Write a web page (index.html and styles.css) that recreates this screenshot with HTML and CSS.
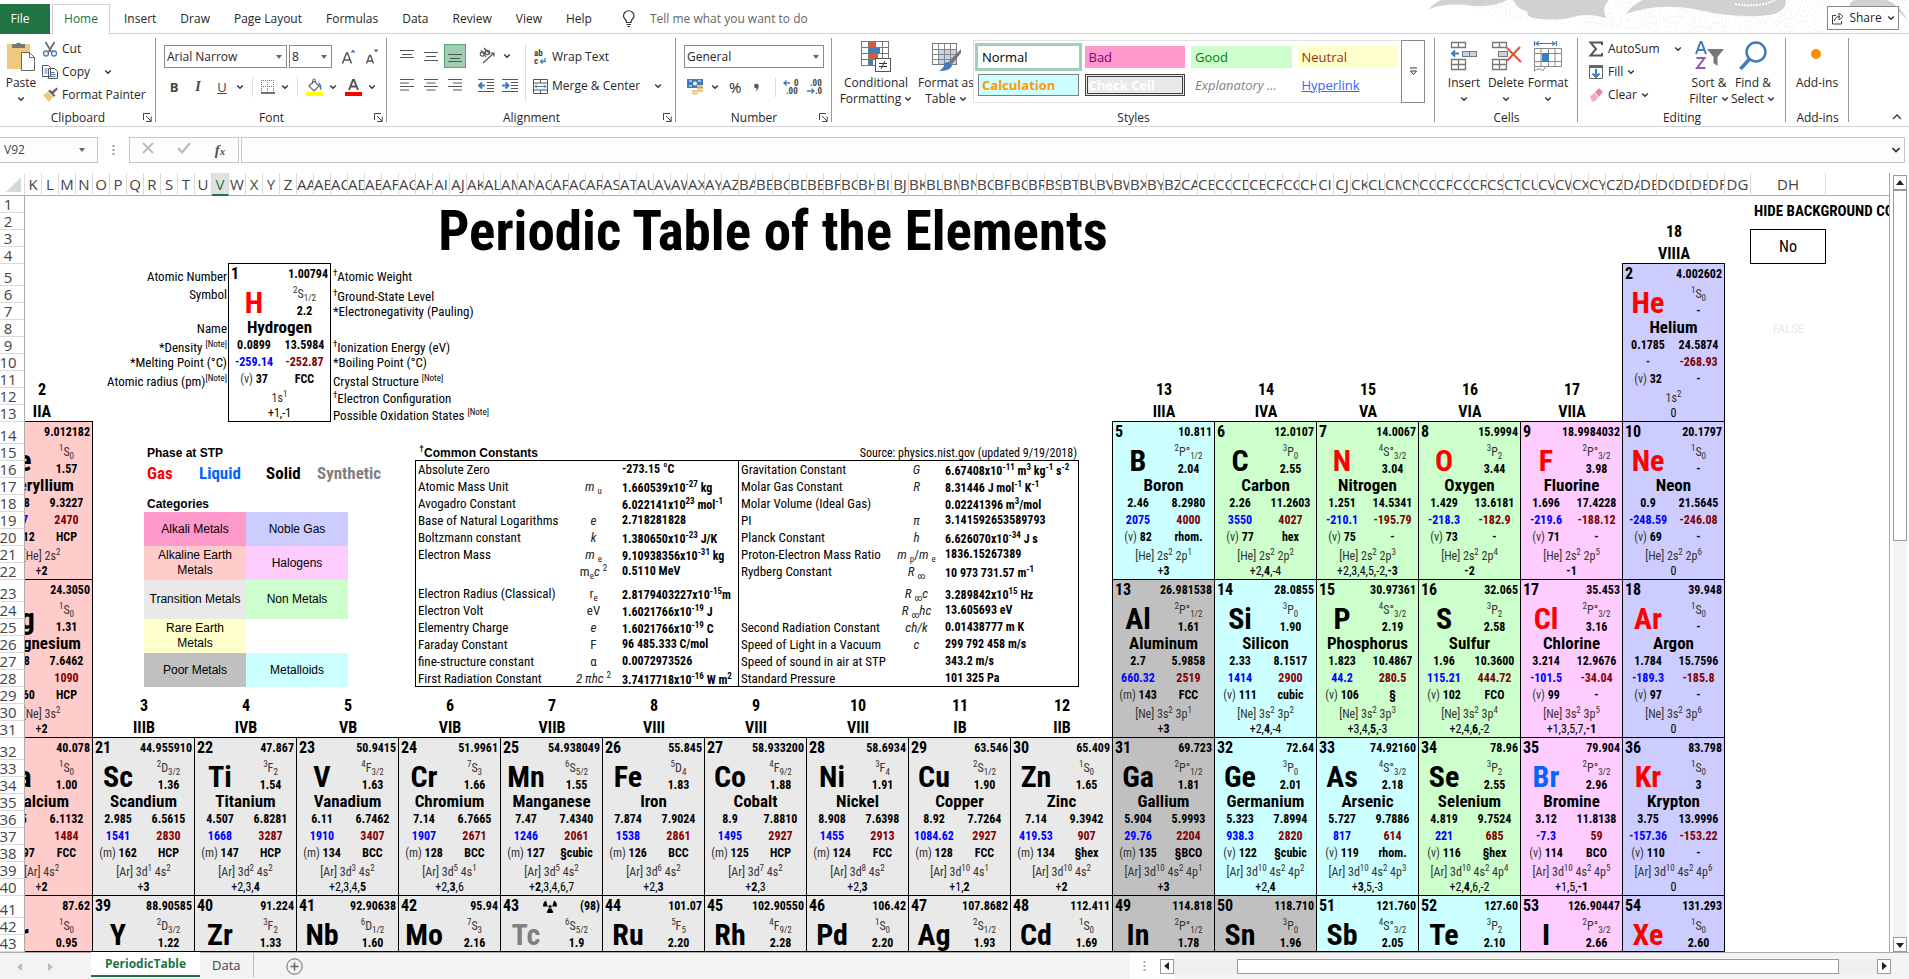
FILE: index.html
```html
<!DOCTYPE html>
<html lang="en">
<head>
<meta charset="utf-8">
<title>PeriodicTable</title>
<link rel="stylesheet" href="styles.css">
</head>
<body>
<svg class="defs" width="0" height="0" aria-hidden="true">
  <symbol id="chev" viewBox="0 0 8 8"><path d="M1.2 2.5 4 5.3 6.8 2.5" fill="none" stroke="#333" stroke-width="1.4"/></symbol>
  <symbol id="tri" viewBox="0 0 8 8"><path d="M1 2h6L4 6z" fill="#666"/></symbol>
  <symbol id="launch" viewBox="0 0 9 9"><path d="M.5 7V.5H7M3 3l5 5M8.200 3.500v5h-5" fill="none" stroke="#444"/></symbol>
</svg>

<header class="tabs">
  <svg class="art" viewBox="0 0 480 33" aria-hidden="true">
    <filter id="grain" x="0" y="0" width="1" height="1"><feTurbulence type="fractalNoise" baseFrequency=".8" numOctaves="2"/><feColorMatrix values="0 0 0 0 .82  0 0 0 0 .82  0 0 0 0 .82  0 0 0 5 -2.800"/><feComposite in2="SourceGraphic" operator="in"/></filter>
    <path d="M20 0H480V33H250Q130 26 60 15Z" fill="#fff" filter="url(#grain)"/>
    <path d="M0 9Q8 0 14 0H78Q66 7 44 6Q20 2 0 9Z" fill="#d1d1d1"/>
    <path d="M84 0H180Q172 8 177 18Q160 13 148 16Q130 22 104 18Q96 15 99 12Q88 9 84 0Z" fill="#d1d1d1"/>
    <path d="M197 14Q204 4 214 0H357Q358 12 340 15Q310 19 270 10Q230 2 197 14Z" fill="#d1d1d1"/>
    <path d="M306 4Q330 8 346 0" fill="none" stroke="#fff" stroke-width="2" stroke-dasharray="2 1"/>
    <path d="M420 8Q420 2 426 0H458Q470 5 479 20L470 12Q440 4 420 8Z" fill="#d1d1d1"/>
  </svg>
  <nav class="tablist">
    <button class="tab file">File</button>
    <button class="tab home">Home</button>
    <button class="tab">Insert</button>
    <button class="tab">Draw</button>
    <button class="tab">Page Layout</button>
    <button class="tab">Formulas</button>
    <button class="tab">Data</button>
    <button class="tab">Review</button>
    <button class="tab">View</button>
    <button class="tab">Help</button>
  </nav>
  <button class="tell"><svg width="14" height="18" viewBox="0 0 14 18"><path d="M4.500 12.500Q4.500 10.500 3 9Q1.500 7.500 1.500 6A5 5 0 0 1 12 6Q12 7.500 10.500 9Q9 10.500 9 12.500ZM4.500 14.500H9M5.500 16.500H8" fill="none" stroke="#333" stroke-width="1.200"/></svg>Tell me what you want to do</button>
  <button class="share"><svg width="13" height="13" viewBox="0 0 13 13"><path d="M5 3.500H1.500V12H10.500V9M3.500 9Q4 4.500 9 4.500M8 1l4 3.500L8 8z" fill="none" stroke="#444"/></svg>Share<svg class="c"><use href="#chev"/></svg></button>
</header>

<section class="ribbon">
  <div class="group clip">
    <div class="body">
      <button class="big"><svg width="30" height="31" viewBox="0 0 30 31"><rect x="1" y="3" width="23" height="25" fill="#edc87e"/><path d="M6 3h4a3 3 0 0 1 5 0h4v4H6z" fill="#777"/><path d="M15.500 11.500h8l5 5v13h-13z" fill="#fff" stroke="#666"/><path d="M23.500 11.500v5h5" fill="none" stroke="#666"/></svg><span>Paste</span><svg class="c"><use href="#chev"/></svg></button>
      <div class="stack">
        <button><svg width="16" height="16" viewBox="0 0 16 16"><path d="M3.500 1l6 10M12.500 1l-6 10" stroke="#666" stroke-width="1.600"/><circle cx="4" cy="12.500" r="2.500" fill="none" stroke="#3f7cb8" stroke-width="1.300"/><circle cx="12" cy="12.500" r="2.500" fill="none" stroke="#3f7cb8" stroke-width="1.300"/></svg>Cut</button>
        <button><svg width="16" height="16" viewBox="0 0 16 16"><path d="M.5 1.500h6l2 2v9h-8zM6.500 4.500h6l3 3v7h-9z" fill="#fff" stroke="#555"/><path d="M2.500 5h3M2.500 7h3M2.500 9h3M8.500 8.500h4M8.500 10.500h5M8.500 12.500h5" stroke="#3f7cb8"/></svg>Copy<svg class="c far"><use href="#chev"/></svg></button>
        <button><svg width="16" height="16" viewBox="0 0 16 16"><path d="M1 8l5-3 5 5-4 5z" fill="#edc87e"/><path d="M6 4l6 6 1.500-1.500-2-2L16 2 14.500.5 10 4.500l-2-2z" fill="#666"/></svg>Format Painter</button>
      </div>
    </div>
    <footer>Clipboard<svg class="l"><use href="#launch"/></svg></footer>
  </div>

  <div class="group font">
    <div class="body rows">
      <div class="row">
        <label class="combo w123"><select aria-label="Font"><option>Arial Narrow</option></select><svg class="c"><use href="#tri"/></svg></label>
        <label class="combo w43"><select aria-label="Font size"><option>8</option></select><svg class="c"><use href="#tri"/></svg></label>
        <button class="ic g6" aria-label="Increase font size"><svg width="16" height="18" viewBox="0 0 16 18"><path d="M1.500 15.500L5.500 5h1l4 10.500M3 12h6" fill="none" stroke="#555" stroke-width="1.500"/><path d="M9.500 4.500h5l-2.500-3z" fill="#3f7cb8"/></svg></button>
        <button class="ic g6" aria-label="Decrease font size"><svg width="16" height="18" viewBox="0 0 16 18"><path d="M2.500 15.500L5.500 7.500h1l3 8M3.500 13h5" fill="none" stroke="#555" stroke-width="1.400"/><path d="M9.500 1.500h5l-2.500 3z" fill="#3f7cb8"/></svg></button>
      </div>
      <div class="row fmt">
        <button class="ic"><b>B</b></button><button class="ic"><i>I</i></button><button class="ic"><u>U</u></button><svg class="c"><use href="#chev"/></svg><span class="vr"></span>
        <button class="ic" aria-label="Borders"><svg width="14" height="14" viewBox="0 0 14 14"><path d="M.5 0v13M6.500 0v13M12.500 0v13M0 .5h13M0 6.500h13" stroke="#777" stroke-dasharray="1 1"/><path d="M0 13h14" stroke="#444" stroke-width="1.500"/></svg></button><svg class="c"><use href="#chev"/></svg><span class="vr"></span>
        <button class="ic" aria-label="Fill colour"><svg width="17" height="18" viewBox="0 0 17 18"><path d="M3 8l5-5 5 5-5 5z" fill="#fff" stroke="#666" stroke-width="1.200"/><path d="M6.500 6V2.500a1.500 1.500 0 0 1 3 0V5" fill="none" stroke="#666"/><path d="M12 4q4 2 3.500 8-2 0-2-4z" fill="#3f7cb8"/><path d="M0 14h17v4H0z" fill="#ff0"/></svg></button><svg class="c"><use href="#chev"/></svg>
        <button class="ic" aria-label="Font colour"><svg width="17" height="18" viewBox="0 0 17 18"><path d="M4 12L8 2h1l4 10M5.500 8.500h6" fill="none" stroke="#555" stroke-width="2"/><path d="M0 14h17v4H0z" fill="red"/></svg></button><svg class="c"><use href="#chev"/></svg>
      </div>
    </div>
    <footer>Font<svg class="l"><use href="#launch"/></svg></footer>
  </div>

  <div class="group align">
    <div class="body">
      <div class="grid3">
        <button class="ic"><svg width="14" height="14" viewBox="0 0 14 14"><path d="M0 1.500h14M2 5.500h10M0 8.500h14" stroke="#555"/></svg></button>
        <button class="ic"><svg width="14" height="14" viewBox="0 0 14 14"><path d="M0 3.500h14M2 7.500h10M0 11.500h14" stroke="#555"/></svg></button>
        <button class="ic on"><svg width="14" height="14" viewBox="0 0 14 14"><path d="M0 5.500h14M2 9.500h10M0 12.500h14" stroke="#555"/></svg></button>
        <button class="ic"><svg width="14" height="14" viewBox="0 0 14 14"><path d="M0 1.500h14M0 5h9M0 8.500h14M0 12h9" stroke="#555"/></svg></button>
        <button class="ic"><svg width="14" height="14" viewBox="0 0 14 14"><path d="M0 1.500h14M2.500 5h9M0 8.500h14M2.500 12h9" stroke="#555"/></svg></button>
        <button class="ic"><svg width="14" height="14" viewBox="0 0 14 14"><path d="M0 1.500h14M5 5h9M0 8.500h14M5 12h9" stroke="#555"/></svg></button>
      </div>
      <div class="grid2">
        <div class="row"><button class="ic" aria-label="Orientation"><svg width="18" height="18" viewBox="0 0 18 18"><circle cx="4.500" cy="7" r="2.200" fill="none" stroke="#555" stroke-width="1.200"/><circle cx="9.500" cy="5.500" r="2.200" fill="none" stroke="#555" stroke-width="1.200"/><path d="M3 3l5 7M6 1l5.500 5.500M5 16L16 6M12.500 6H16v3.500" fill="none" stroke="#555" stroke-width="1.200"/></svg></button><svg class="c"><use href="#chev"/></svg></div>
        <div class="row"><button class="ic" aria-label="Decrease indent"><svg width="17" height="15" viewBox="0 0 17 15"><path d="M0 1.500h16M9 4.500h7M9 7.500h7M9 10.500h7M0 13.500h16" stroke="#555"/><path d="M1 7.500h6M4 4.500l-3 3 3 3" fill="none" stroke="#3f7cb8" stroke-width="2"/></svg></button><button class="ic" aria-label="Increase indent"><svg width="17" height="15" viewBox="0 0 17 15"><path d="M0 1.500h16M9 4.500h7M9 7.500h7M9 10.500h7M0 13.500h16" stroke="#555"/><path d="M0 7.500h6M3.500 4.500l3 3-3 3" fill="none" stroke="#3f7cb8" stroke-width="2"/></svg></button></div>
      </div>
      <div class="wrapcol">
        <button><svg width="15" height="16" viewBox="0 0 15 16"><text x="1" y="7" class="ab">ab</text><text x="1" y="15" class="ab">c</text><path d="M12 9v3.500H7.500M9.500 10.500l-2 2 2 2" fill="none" stroke="#3f7cb8" stroke-width="1.300"/></svg>Wrap Text</button>
        <button class="merge"><svg width="15" height="15" viewBox="0 0 15 15"><path d="M.5.5h14v14H.5zM.5 4h14M.5 11h14M7.500.5V4M7.500 11v3.500" fill="none" stroke="#555"/><path d="M2 7.500h11M4 5.500l-2 2 2 2M11 5.500l2 2-2 2" fill="none" stroke="#3f7cb8"/></svg>Merge &amp; Center<svg class="c"><use href="#chev"/></svg></button>
      </div>
    </div>
    <footer>Alignment<svg class="l"><use href="#launch"/></svg></footer>
  </div>

  <div class="group number">
    <div class="body rows">
      <div class="row"><label class="combo w140"><select aria-label="Number format"><option>General</option></select><svg class="c"><use href="#tri"/></svg></label></div>
      <div class="row num">
        <button class="ic" aria-label="Currency"><svg width="17" height="17" viewBox="0 0 17 17"><rect x="0" y="0" width="16" height="9" fill="#3f7cb8"/><path d="M2 2h3M11 2h3M2 7h3" stroke="#fff"/><circle cx="8" cy="4.500" r="2" fill="#fff"/><path d="M10 7h6M10 9.500h6M10 12h6M5 12h5M5 14.500h6" stroke="#edc87e" stroke-width="2"/></svg></button><svg class="c"><use href="#chev"/></svg>
        <button class="ic big-ch">%</button><button class="ic comma" aria-label="Comma style"><svg width="7" height="9" viewBox="0 0 7 9"><path d="M1 3a2.300 2.300 0 1 1 4.700 0Q5.500 7 2 8.500 4 6.500 3.600 5.200 1.300 5.300 1 3z" fill="#555"/></svg></button><span class="vr"></span>
        <button class="ic" aria-label="Increase decimal"><svg width="17" height="16" viewBox="0 0 17 16"><text x="11" y="7" class="ab">0</text><text x="3" y="15" class="ab">.00</text><path d="M1 4h6M3.500 1.500L1 4l2.500 2.500" fill="none" stroke="#3f7cb8" stroke-width="1.300"/></svg></button>
        <button class="ic" aria-label="Decrease decimal"><svg width="17" height="16" viewBox="0 0 17 16"><text x="3" y="7" class="ab">.00</text><text x="8" y="15" class="ab">.0</text><path d="M0 12h7M4.500 9.500L7 12l-2.500 2.500" fill="none" stroke="#3f7cb8" stroke-width="1.300"/></svg></button>
      </div>
    </div>
    <footer>Number<svg class="l"><use href="#launch"/></svg></footer>
  </div>

  <div class="group styles">
    <div class="body">
      <button class="big w88"><svg width="31" height="31" viewBox="0 0 31 31"><rect x=".5" y=".5" width="27" height="24" fill="#fff" stroke="#777"/><path d="M7.500 0v25M14.500 0v25M21.500 0v25M0 6.500h28M0 12.500h28M0 18.500h28" stroke="#777"/><path d="M8 1h6v5H8zM8 13h9v5H8z" fill="#d9593d"/><path d="M8 7h11v5H8zM8 19h4v5H8z" fill="#3f7cb8"/><rect x="14.500" y="17.500" width="15" height="13" fill="#fff" stroke="#555"/><path d="M18 22.500h8M18 25.500h8M24 20l-4 8" stroke="#333"/></svg><span>Conditional</span><span>Formatting <svg class="c"><use href="#chev"/></svg></span></button>
      <button class="big w66"><svg width="31" height="31" viewBox="0 0 31 31"><rect x="1.500" y="2.500" width="24" height="21" fill="#fff" stroke="#777"/><path d="M8 8h17v15H8z" fill="#c2d3e8"/><path d="M7.500 2v22M13.500 2v22M19.500 2v22M1 8.500h25M1 13.500h25M1 18.500h25" stroke="#888"/><path d="M30 8L18 20l3 3 9-11z" fill="#777"/><path d="M17 21q4 0 4 4-2 5-13 5 5-3 5-6 1-3 4-3z" fill="#3f7cb8"/></svg><span>Format as</span><span>Table <svg class="c"><use href="#chev"/></svg></span></button>
      <div class="gallery">
        <div class="swatches">
          <button class="sw normal">Normal</button><button class="sw bad">Bad</button><button class="sw good">Good</button><button class="sw neutral">Neutral</button>
          <button class="sw calc">Calculation</button><button class="sw check">Check Cell</button><button class="sw expl">Explanatory ...</button><button class="sw link">Hyperlink</button>
        </div>
        <button class="more" aria-label="More styles"><svg width="9" height="9" viewBox="0 0 9 9"><path d="M1 1h7" stroke="#333"/><path d="M1.500 4h6L4.500 7.500z" fill="none" stroke="#333"/></svg></button>
      </div>
    </div>
    <footer>Styles</footer>
  </div>

  <div class="group cells">
    <div class="body">
      <button class="big w42"><svg width="29" height="31" viewBox="0 0 29 31"><path d="M1.500 1.500h14v5h-14zM8.500 1.500v5M1.500 18.500h14v10h-14zM8.500 18.500v10M1.500 23.500h14" fill="none" stroke="#777" stroke-width="1.300"/><rect x="12.500" y="10.500" width="14" height="5" fill="#c2d3e8" stroke="#777"/><path d="M19.500 10v6" stroke="#777"/><path d="M2 12.500h7M5 9.500l-3 3 3 3" fill="none" stroke="#3f7cb8" stroke-width="2"/></svg><span>Insert</span><svg class="c"><use href="#chev"/></svg></button>
      <button class="big w42"><svg width="31" height="31" viewBox="0 0 31 31"><path d="M1.500 1.500h14v5h-14zM8.500 1.500v5M1.500 18.500h14v10h-14zM8.500 18.500v10M1.500 23.500h14" fill="none" stroke="#777" stroke-width="1.300"/><rect x="7.500" y="10.500" width="9" height="5" fill="#c2d3e8" stroke="#777"/><path d="M16 7l14 14M29 6L16 20" stroke="#d9593d" stroke-width="2.200"/></svg><span>Delete</span><svg class="c"><use href="#chev"/></svg></button>
      <button class="big w42"><svg width="30" height="31" viewBox="0 0 30 31"><path d="M1.500 0v5M23.500 0v5M3 2.500h19M6 .5l-3 2 3 2M19 .5l3 2-3 2" fill="none" stroke="#3f7cb8" stroke-width="1.200"/><path d="M1.500 7.500h27v18h-27zM8 7v19M15.500 7v19M22 7v19M1 12.500h28M1 20.500h28M1.500 26v4l3-2h3l2 2 3-4" fill="none" stroke="#888"/><rect x="9" y="12" width="7" height="9" fill="#3f7cb8"/></svg><span>Format</span><svg class="c"><use href="#chev"/></svg></button>
    </div>
    <footer>Cells</footer>
  </div>

  <div class="group editing">
    <div class="body">
      <div class="stack">
        <button><svg width="16" height="16" viewBox="0 0 16 16"><path d="M14 4V1.500H2.500L8 8l-5.500 6.500H14V12" fill="none" stroke="#555" stroke-width="2"/></svg>AutoSum<svg class="c far"><use href="#chev"/></svg></button>
        <button><svg width="16" height="16" viewBox="0 0 16 16"><path d="M1.500 1.500h13v13h-13z" fill="#fff" stroke="#666"/><path d="M1 1h14v3H1z" fill="#666"/><path d="M8 5v8M4.500 9.500L8 13l3.500-3.500" fill="none" stroke="#3f7cb8" stroke-width="2"/></svg>Fill <svg class="c"><use href="#chev"/></svg></button>
        <button><svg width="16" height="16" viewBox="0 0 16 16"><path d="M7 5l4-4 4 4-4 5z" fill="#e68a9a"/><path d="M2 9.500L6.500 5.500l4 5-4 4H4z" fill="#efb0bb"/></svg>Clear <svg class="c"><use href="#chev"/></svg></button>
      </div>
      <button class="big w44"><svg width="31" height="31" viewBox="0 0 31 31"><path d="M2 13L6.500 1h1L12 13M3.500 9h7" fill="none" stroke="#3f7cb8" stroke-width="2"/><path d="M2.500 17h8L3 27h8.500" fill="none" stroke="#8d5bb5" stroke-width="2"/><path d="M13 8h17l-6.500 8v9l-4-3v-6z" fill="#777"/></svg><span>Sort &amp;</span><span>Filter <svg class="c"><use href="#chev"/></svg></span></button>
      <button class="big w44"><svg width="31" height="31" viewBox="0 0 31 31"><circle cx="18" cy="11" r="9.500" fill="none" stroke="#3f7cb8" stroke-width="2.500"/><path d="M11.500 18L2.500 28" stroke="#3f7cb8" stroke-width="3.500"/></svg><span>Find &amp;</span><span>Select <svg class="c"><use href="#chev"/></svg></span></button>
    </div>
    <footer>Editing</footer>
  </div>

  <div class="group addins">
    <div class="body"><button class="big"><svg width="31" height="31" viewBox="0 0 31 31"><circle cx="14" cy="13" r="5" fill="#ff8c00"/></svg><span>Add-ins</span></button></div>
    <footer>Add-ins</footer>
  </div>
  <button class="collapse" aria-label="Collapse the ribbon"><svg width="10" height="8" viewBox="0 0 10 8"><path d="M1 6l4-4 4 4" fill="none" stroke="#333" stroke-width="1.300"/></svg></button>
</section>

<section class="fbar">
  <label class="namebox"><input value="V92" aria-label="Name box"><svg width="10" height="8" viewBox="0 0 8 8"><use href="#tri"/></svg></label>
  <svg class="dots" width="3" height="12" viewBox="0 0 3 12"><path d="M1.500 1v11" stroke="#999" stroke-width="2" stroke-dasharray="2 2"/></svg>
  <div class="fbtns">
    <button aria-label="Cancel"><svg width="12" height="12" viewBox="0 0 12 12"><path d="M1 1l10 10M11 1L1 11" stroke="#bbb" stroke-width="1.800"/></svg></button>
    <button aria-label="Enter"><svg width="14" height="12" viewBox="0 0 14 12"><path d="M1 6l4 4.500L13 1" fill="none" stroke="#bbb" stroke-width="2.200"/></svg></button>
    <button class="fx">f<small>x</small></button>
  </div>
  <label class="formula"><input aria-label="Formula"><svg width="10" height="10" viewBox="0 0 8 8"><use href="#chev"/></svg></label>
</section>

<main class="work">
  <div class="sheet" id="sheet"></div>
  <div class="vscroll">
    <button aria-label="Scroll up"><svg width="8" height="8" viewBox="0 0 8 8"><path d="M0 6h8L4 1z" fill="#222"/></svg></button>
    <div class="vthumb"></div>
    <div class="vtrack"></div>
    <button aria-label="Scroll down"><svg width="8" height="8" viewBox="0 0 8 8"><path d="M0 2h8L4 7z" fill="#222"/></svg></button>
  </div>
</main>

<footer class="bottom">
  <div class="navs"><button aria-label="Previous sheet"><svg width="6" height="8" viewBox="0 0 6 8"><path d="M5 0v8L0 4z" fill="#bbb"/></svg></button><button aria-label="Next sheet"><svg width="6" height="8" viewBox="0 0 6 8"><path d="M1 0v8l5-4z" fill="#bbb"/></svg></button></div>
  <button class="stab active">PeriodicTable</button>
  <button class="stab">Data</button>
  <button class="plus" aria-label="New sheet"><svg width="17" height="17" viewBox="0 0 17 17"><circle cx="8.500" cy="8.500" r="7.700" fill="none" stroke="#666"/><path d="M8.500 4.500v8M4.500 8.500h8" stroke="#666" stroke-width="1.500"/></svg></button>
  <div class="hscroll">
    <svg class="dots" width="3" height="12" viewBox="0 0 3 12"><path d="M1.500 1v11" stroke="#aaa" stroke-width="2" stroke-dasharray="2 2"/></svg>
    <button aria-label="Scroll left"><svg width="8" height="8" viewBox="0 0 8 8"><path d="M6 0v8L1 4z" fill="#222"/></svg></button>
    <div class="htrack"><div class="hthumb"></div></div>
    <button aria-label="Scroll right"><svg width="8" height="8" viewBox="0 0 8 8"><path d="M2 0v8l5-4z" fill="#222"/></svg></button>
  </div>
</footer>
<script src="script.js"></script>
</body>
</html>
```
FILE: styles.css
```css
* { box-sizing: border-box; }
body { margin: 0; height: 100vh; display: flex; flex-direction: column; overflow: hidden; background: #fff; color: #262626; font: 12px/16px "Open Sans", "Noto Sans", sans-serif; }
button, input, select { font: inherit; color: inherit; background: none; border: 0; padding: 0; margin: 0; border-radius: 0; appearance: none; }
svg { flex: none; }
.defs { position: absolute; }
.c { width: 8px; height: 8px; }
.l { width: 9px; height: 9px; }

/* tab strip */
.tabs { position: relative; height: 34px; border-bottom: 1px solid #d2d2d2; display: flex; align-items: flex-end; }
.art { position: absolute; right: 0; top: 0; width: 480px; height: 33px; }
.tablist { display: flex; height: 30px; margin-bottom: -1px; }
.tab { padding: 0 11px 2px; border: 1px solid transparent; border-bottom: 0; white-space: nowrap; }
.tab.file { background: #217346; color: #fff; width: 50px; margin-right: 2px; padding: 0 10px 2px 0; }
.tab.home { background: #fff; color: #217346; border-color: #d2d2d2; width: 58px; padding: 0 0 2px; margin-right: 2px; }
.tell { display: flex; align-items: center; gap: 14px; color: #666; height: 29px; margin-left: 18px; }
.share { position: relative; margin: 0 10px 3px auto; height: 24px; width: 72px; border: 1px solid #8a8a8a; background: #fff; display: flex; align-items: center; justify-content: center; gap: 5px; }

/* ribbon */
.ribbon { position: relative; display: flex; height: 93px; border-bottom: 1px solid #d2d2d2; flex: none; padding-right: 60px; }
.group { position: relative; display: grid; grid-template-rows: 73px 17px; padding-top: 3px; }
.group::after { content: ""; position: absolute; right: 0; top: 4px; bottom: 4px; width: 1px; background: #999; }
.group footer { text-align: center; }
.group footer .l { position: absolute; right: 4px; bottom: 4px; }
.body { display: flex; }
.clip { width: 156px; }
.font { width: 231px; }
.align { width: 289px; }
.number { width: 156px; }
.styles { flex: 1; }
.cells { width: 143px; }
.editing { width: 208px; }
.addins { width: 63px; }
.big { display: flex; flex-direction: column; align-items: center; padding-top: 4px; white-space: nowrap; }
.big > svg:first-child { margin-bottom: 3px; }
.big > .c { margin-top: 4px; }
.clip .big { width: 42px; }
.w88 { width: 88px; }
.w66 { width: 52px; }
.w42 { width: 42px; }
.w44 { width: 44px; }
.stack { display: grid; grid-template-rows: repeat(3, 23px); }
.stack button { display: flex; align-items: center; gap: 4px; white-space: nowrap; }
.far { margin-left: 10px; }
.rows { flex-direction: column; padding: 8px 0 0 8px; gap: 8px; }
.row { display: flex; align-items: center; }
.combo { position: relative; display: flex; border: 1px solid #8a8a8a; height: 23px; margin-right: 2px; }
.combo select { flex: 1; padding-left: 2px; }
.combo .c { position: absolute; right: 3px; top: 7px; pointer-events: none; }
.w123 { width: 123px; }
.w43 { width: 43px; }
.w140 { width: 140px; }
.ic { display: flex; align-items: center; justify-content: center; }
.g6 { margin-left: 7px; }
.fmt { gap: 8px; height: 22px; padding-left: 2px; }
.fmt .ic { min-width: 14px; font-size: 13px; }
.fmt i { font-family: "Liberation Serif", serif; font-weight: bold; font-size: 14px; }
.fmt .ic:nth-child(-n+3) { width: 16px; color: #444; }
.fmt .c { margin-left: -2px; }
.vr { width: 1px; height: 20px; background: #ddd; }
.grid3 { display: grid; grid-template: 25px 34px / repeat(3, 24px); padding: 6px 0 0 8px; align-items: center; justify-items: center; }
.on { background: #9fccb3; border: 1px solid #5fa07c; width: 22px; height: 24px; }
.grid2 { display: grid; grid-template-rows: 25px 34px; padding: 6px 0 0 11px; width: 58px; }
.grid2 .row { gap: 7px; }
.wrapcol { border-left: 1px solid #ddd; margin: 7px 0 9px; display: grid; grid-template-rows: 25px 34px; padding-left: 7px; }
.wrapcol button { display: flex; align-items: center; gap: 4px; white-space: nowrap; }
.merge .c { margin-left: 10px; }
.ab { font: bold 9px "Roboto Condensed", "Liberation Sans", sans-serif; fill: #444; }
.num { gap: 7px; height: 22px; padding-left: 3px; }
.big-ch { font-size: 15px; margin-left: 3px; }
.comma { margin: 0 8px 0 5px; }
.gallery { display: flex; flex: 1; margin: 3px 10px 7px 1px; border: 1px solid #e1e1e1; height: 63px; }
.swatches { flex: 1; display: grid; grid-template: 22px 22px / repeat(4, 1fr); gap: 6px; padding: 5px 4px; }
.sw { text-align: left; padding: 0 4px; font-size: 13px; white-space: nowrap; overflow: hidden; }
.normal { outline: 3px solid #9fd0b8; color: #000; }
.bad { background: #ff99cc; color: #800080; }
.good { background: #ccffcc; color: #008000; }
.neutral { background: #ffffcc; color: #993300; }
.calc { background: #ccffff; color: #ff9900; border: 1px solid #7f7f7f; font-weight: bold; padding: 0 3px; line-height: 16px; }
.check { background: #e9e9e9; color: #fff; border: 3px double #3f3f3f; font-weight: bold; padding: 0 1px; line-height: 14px; }
.expl { color: #7f7f7f; font-style: italic; }
.link { color: #3366ff; text-decoration: underline; }
.more { width: 24px; border: 1px solid #8a8a8a; margin: -1px; }
.cells .body { padding-left: 8px; }
.editing .body { padding-left: 10px; }
.editing .stack { width: 99px; }
.editing .stack .far { margin-left: 10px; }
.addins .big { width: 62px; }
.collapse { position: absolute; right: 7px; bottom: 1px; }

/* formula bar */
.fbar { display: flex; align-items: center; padding: 10px 4px 10px 0; flex: none; height: 46px; }
.namebox, .formula { display: flex; align-items: center; border: 1px solid #c6c6c6; height: 26px; background: #fdfdfd; }
.namebox { width: 98px; border-left: 0; padding-right: 10px; }
.namebox input { flex: 1; min-width: 0; padding-left: 4px; color: #444; }
.dots { margin: 0 14px; }
.fbtns { display: flex; width: 110px; height: 26px; border: 1px solid #c6c6c6; background: #fdfdfd; margin-right: 2px; }
.fbtns button { flex: 1; }
.fx { font: italic bold 15px "Liberation Serif", serif; color: #555; }
.fx small { font-size: 11px; }
.formula { flex: 1; padding-right: 3px; }
.formula input { flex: 1; }

/* sheet */
.work { flex: 1; min-height: 0; display: flex; }
.sheet { flex: 1; min-width: 0; overflow: hidden; display: grid; align-content: start;
  grid-template-columns: 25px repeat(100, 17px) 26px 75px 1fr;
  grid-template-rows: 23px repeat(4, 17px) repeat(5, 22px 17px 17px 17px 17px 17px 17px 17px 17px);
  font: 13px/17px "Roboto Condensed", "Liberation Sans", sans-serif; color: #000; border-right: 1px solid #ababab; }
.corner { border-right: 1px solid #ddd; border-bottom: 1px solid #ababab; display: flex; justify-content: flex-end; padding: 4px 3px 3px; }
.ch { display: flex; justify-content: safe center; align-items: center; overflow: hidden; border-right: 1px solid #dadada; border-bottom: 1px solid #ababab; font: 15px/22px "Open Sans", sans-serif; color: #444; min-width: 0; }
.ch.last { border-right: 0; }
.ch.sel { background: #e1e1e1; color: #217346; border-bottom: 2px solid #217346; }
.rh { display: flex; align-items: flex-end; justify-content: center; padding-right: 8px; border-right: 1px solid #ababab; border-bottom: 1px solid #dadada; font: 15px/16px "Open Sans", sans-serif; color: #444; position: relative; z-index: 1; background: #fff; }
sup, sub { font-size: 9px; line-height: 0; }
sup { vertical-align: 5px; }
sub { vertical-align: -3px; }

.title { display: flex; align-items: center; justify-content: center; font-weight: bold; font-size: 55px; line-height: 60px; white-space: nowrap; padding-top: 2px; }
.gn, .gr { display: flex; align-items: center; justify-content: center; font-weight: bold; font-size: 16px; }
.gn { padding-top: 3px; }
.gr { padding-bottom: 4px; }

.el { margin: -1px 0 0 -1px; border: 1px solid #000; display: grid; grid-template: 21px repeat(8, 17px) / 50px 51px; overflow: hidden; font-size: 12px; font-weight: bold; text-align: center; white-space: nowrap; line-height: 18px; justify-content: end; }
.el.cut { margin-left: 0; border-left: 0; }
.el > span { min-width: 0; }
.el .top { grid-column: 1 / 3; display: flex; justify-content: space-between; padding: 0 2px; line-height: 20px; }
.el .z { font-size: 16px; }
.el .sym { grid-row: 2 / 4; font-size: 30px; line-height: 36px; display: flex; justify-content: center; }
.el .term { font-weight: normal; color: #333; line-height: 19px; }
.el .name { grid-column: 1 / 3; font-size: 17px; line-height: 16px; display: flex; justify-content: center; }
.el .mp { color: #0000ff; }
.el .bp { color: #800000; }
.el em { font-style: normal; font-weight: normal; color: #333; }
.el .conf { grid-column: 1 / 3; font-weight: normal; color: #333; line-height: 23px; }
.el .ox { grid-column: 1 / 3; font-weight: normal; line-height: 18px; }
.rad { margin-top: 4px; }

.alkali { background: #ff99cc; }
.earth { background: #ffcccc; }
.trans { background: #e9e9e9; }
.rare { background: #ffffcc; }
.poor { background: #c0c0c0; }
.metalloid { background: #ccffff; }
.nonmetal { background: #ccffcc; }
.halogen { background: #ffccff; }
.noble { background: #ccccff; }
.gas { color: #ff0000; }
.liquid { color: #0066ff; }
.synthetic { color: #808080; }

.lab { align-self: stretch; white-space: nowrap; padding: 0 2px; line-height: 17px; }
.lab.r { text-align: right; }
.lab.tall { padding-top: 4px; }
.lab.low { line-height: 21px; }
.lab.cap { font: bold 12px/18px "Liberation Sans", sans-serif; padding-left: 3px; }
.phase { display: grid; grid-template-columns: 52px 67px 51px auto; align-items: center; font-weight: bold; font-size: 17px; padding: 0 0 10px 3px; white-space: nowrap; }
.cat { display: flex; align-items: center; justify-content: center; text-align: center; font: 12px/15px "Liberation Sans", sans-serif; }

.consts { margin: -1px 0 0 -1px; border: 1px solid #000; }
.consts table { border-collapse: collapse; table-layout: fixed; width: 100%; }
.consts td { padding: 0; height: 17px; vertical-align: bottom; white-space: nowrap; }
.consts tr.tall td { height: 22px; }
.consts td div { height: 17px; line-height: 17px; }
.consts td:nth-child(1) { width: 152px; padding-left: 2px; }
.consts td:nth-child(2) { width: 51px; text-align: center; color: #222; }
.consts td:nth-child(3) { padding-left: 3px; font-weight: bold; font-size: 12px; }
.consts td:nth-child(3) div.low { line-height: 20px; }
.source { text-align: right; font-size: 12px; line-height: 19px; padding-right: 2px; }
.hide { font-weight: bold; font-size: 15px; white-space: nowrap; overflow: hidden; padding: 7px 0 0 3px; }
.no { margin: -1px 0 0 -1px; border: 1px solid #000; display: flex; align-items: center; justify-content: center; font-size: 16px; }
.false { color: #e9e9e9; text-align: center; font-size: 13px; }

/* scroll bars and sheet tabs */
.vscroll { width: 19px; padding: 2px 2px 0 3px; display: flex; flex-direction: column; }
.vscroll button, .hscroll button { width: 14px; height: 15px; border: 1px solid #999; background: #fff; display: flex; align-items: center; justify-content: center; flex: none; }
.vthumb { flex: 350; border: 1px solid #999; }
.vtrack { flex: 398; background: #f3f3f3; }
.bottom { height: 27px; flex: none; display: flex; align-items: stretch; background: #f3f3f3; border-top: 1px solid #ababab; color: #444; font-size: 13px; }
.navs { width: 91px; display: flex; align-items: center; gap: 24px; padding-left: 17px; }
.stab { padding: 0 12px; margin: 0 0 2px; border-right: 1px solid #bbb; }
.stab.active { background: #fff; color: #217346; font-weight: bold; font-size: 12px; border-bottom: 2px solid #217346; border-right: 0; margin-top: -1px; width: 109px; padding: 0; }
.plus { margin-left: 32px; display: flex; align-items: center; }
.hscroll { margin-left: auto; width: 779px; display: flex; align-items: center; padding-right: 18px; background: linear-gradient(90deg, #fff 45px, #f3f3f3 45px); }
.hscroll .dots { margin: 0 14px 0 13px; }
.htrack { flex: 1; height: 15px; padding: 0 38px 0 63px; background: #efefef; }
.hthumb { height: 15px; border: 1px solid #999; background: #fff; }
```
FILE: script.js
```js
const sheet = document.getElementById('sheet');

const rich = s => s.replace(/\^([^^]+)\^/g, '<sup>$1</sup>').replace(/_([^_]+)_/g, '<sub>$1</sub>');

function place(cls, row, rowEnd, col, colEnd, html) {
  const d = document.createElement('div');
  d.className = cls;
  d.style.gridArea = `${row + 1} / ${col} / ${rowEnd + 1} / ${colEnd}`;
  d.innerHTML = html;
  sheet.append(d);
}

function letters(n) {
  let s = '';
  while (n > 0) { n--; s = String.fromCharCode(65 + n % 26) + s; n = Math.floor(n / 26); }
  return s;
}

// Headings
place('corner', 0, 1, 1, 2, '<svg width="15" height="15" viewBox="0 0 15 15"><path d="M15 0v15H0z" fill="#d8d8d8"/></svg>');
for (let i = 11; i <= 113; i++) {
  const name = i < 113 ? letters(i) : '';
  place('ch' + (name === 'V' ? ' sel' : '') + (i === 113 ? ' last' : ''), 0, 1, i - 9, i - 8, name);
}
for (let r = 1; r <= 43; r++) place('rh', r, r + 1, 1, 2, r);

// kind | phase | slot | row | Z | weight | symbol | term | EN | name | density | IE | melt | boil | radius | structure | config | oxidation
const elements = `
|gas|L|5|1|1.00794|H|^2^S_1/2_|2.2|Hydrogen|0.0899|13.5984|-259.14|-252.87|v 37|FCC|1s^1^|+1,-1
earth||cut|14|4|9.012182|Be|^1^S_0_|1.57|Beryllium|1.848|9.3227|1287|2470|m 112|HCP|[He] 2s^2^|+<b>2</b>
earth||cut|23|12|24.3050|Mg|^1^S_0_|1.31|Magnesium|1.738|7.6462|650|1090|m 160|HCP|[Ne] 3s^2^|+<b>2</b>
earth||cut|32|20|40.078|Ca|^1^S_0_|1.00|Calcium|1.55|6.1132|842|1484|m 197|FCC|[Ar] 4s^2^|+<b>2</b>
earth||cut|41|38|87.62|Sr|^1^S_0_|0.95
trans||0|32|21|44.955910|Sc|^2^D_3/2_|1.36|Scandium|2.985|6.5615|1541|2830|m 162|HCP|[Ar] 3d^1^ 4s^2^|+<b>3</b>
trans||1|32|22|47.867|Ti|^3^F_2_|1.54|Titanium|4.507|6.8281|1668|3287|m 147|HCP|[Ar] 3d^2^ 4s^2^|+2,3,<b>4</b>
trans||2|32|23|50.9415|V|^4^F_3/2_|1.63|Vanadium|6.11|6.7462|1910|3407|m 134|BCC|[Ar] 3d^3^ 4s^2^|+2,3,4,<b>5</b>
trans||3|32|24|51.9961|Cr|^7^S_3_|1.66|Chromium|7.14|6.7665|1907|2671|m 128|BCC|[Ar] 3d^5^ 4s^1^|+2,<b>3</b>,6
trans||4|32|25|54.938049|Mn|^6^S_5/2_|1.55|Manganese|7.47|7.4340|1246|2061|m 127|§cubic|[Ar] 3d^5^ 4s^2^|+<b>2</b>,3,4,6,7
trans||5|32|26|55.845|Fe|^5^D_4_|1.83|Iron|7.874|7.9024|1538|2861|m 126|BCC|[Ar] 3d^6^ 4s^2^|+2,<b>3</b>
trans||6|32|27|58.933200|Co|^4^F_9/2_|1.88|Cobalt|8.9|7.8810|1495|2927|m 125|HCP|[Ar] 3d^7^ 4s^2^|+<b>2</b>,3
trans||7|32|28|58.6934|Ni|^3^F_4_|1.91|Nickel|8.908|7.6398|1455|2913|m 124|FCC|[Ar] 3d^8^ 4s^2^|+2,<b>3</b>
trans||8|32|29|63.546|Cu|^2^S_1/2_|1.90|Copper|8.92|7.7264|1084.62|2927|m 128|FCC|[Ar] 3d^10^ 4s^1^|+1,<b>2</b>
trans||9|32|30|65.409|Zn|^1^S_0_|1.65|Zinc|7.14|9.3942|419.53|907|m 134|§hex|[Ar] 3d^10^ 4s^2^|+<b>2</b>
poor||10|32|31|69.723|Ga|^2^P°_1/2_|1.81|Gallium|5.904|5.9993|29.76|2204|m 135|§BCO|[Ar] 3d^10^ 4s^2^ 4p^1^|+<b>3</b>
metalloid||11|32|32|72.64|Ge|^3^P_0_|2.01|Germanium|5.323|7.8994|938.3|2820|v 122|§cubic|[Ar] 3d^10^ 4s^2^ 4p^2^|+2,<b>4</b>
metalloid||12|32|33|74.92160|As|^4^S°_3/2_|2.18|Arsenic|5.727|9.7886|817|614|v 119|rhom.|[Ar] 3d^10^ 4s^2^ 4p^3^|+<b>3</b>,5,-3
nonmetal||13|32|34|78.96|Se|^3^P_2_|2.55|Selenium|4.819|9.7524|221|685|v 116|§hex|[Ar] 3d^10^ 4s^2^ 4p^4^|+2,<b>4</b>,6,-2
halogen|liquid|14|32|35|79.904|Br|^2^P°_3/2_|2.96|Bromine|3.12|11.8138|-7.3|59|v 114|BCO|[Ar] 3d^10^ 4s^2^ 4p^5^|+1,5,<b>-1</b>
noble|gas|15|32|36|83.798|Kr|^1^S_0_|3|Krypton|3.75|13.9996|-157.36|-153.22|v 110|-|[Ar] 3d^10^ 4s^2^ 4p^6^|0
metalloid||10|14|5|10.811|B|^2^P°_1/2_|2.04|Boron|2.46|8.2980|2075|4000|v 82|rhom.|[He] 2s^2^ 2p^1^|+<b>3</b>
nonmetal||11|14|6|12.0107|C|^3^P_0_|2.55|Carbon|2.26|11.2603|3550|4027|v 77|hex|[He] 2s^2^ 2p^2^|+2,<b>4</b>,-4
nonmetal|gas|12|14|7|14.0067|N|^4^S°_3/2_|3.04|Nitrogen|1.251|14.5341|-210.1|-195.79|v 75|-|[He] 2s^2^ 2p^3^|+2,3,4,5,-2,<b>-3</b>
nonmetal|gas|13|14|8|15.9994|O|^3^P_2_|3.44|Oxygen|1.429|13.6181|-218.3|-182.9|v 73|-|[He] 2s^2^ 2p^4^|<b>-2</b>
halogen|gas|14|14|9|18.9984032|F|^2^P°_3/2_|3.98|Fluorine|1.696|17.4228|-219.6|-188.12|v 71|-|[He] 2s^2^ 2p^5^|<b>-1</b>
noble|gas|15|5|2|4.002602|He|^1^S_0_|-|Helium|0.1785|24.5874|-|-268.93|v 32|-|1s^2^|0
noble|gas|15|14|10|20.1797|Ne|^1^S_0_|-|Neon|0.9|21.5645|-248.59|-246.08|v 69|-|[He] 2s^2^ 2p^6^|0
poor||10|23|13|26.981538|Al|^2^P°_1/2_|1.61|Aluminum|2.7|5.9858|660.32|2519|m 143|FCC|[Ne] 3s^2^ 3p^1^|+<b>3</b>
metalloid||11|23|14|28.0855|Si|^3^P_0_|1.90|Silicon|2.33|8.1517|1414|2900|v 111|cubic|[Ne] 3s^2^ 3p^2^|+2,<b>4</b>,-4
nonmetal||12|23|15|30.97361|P|^4^S°_3/2_|2.19|Phosphorus|1.823|10.4867|44.2|280.5|v 106|§|[Ne] 3s^2^ 3p^3^|+3,4,<b>5</b>,-3
nonmetal||13|23|16|32.065|S|^3^P_2_|2.58|Sulfur|1.96|10.3600|115.21|444.72|v 102|FCO|[Ne] 3s^2^ 3p^4^|+2,4,<b>6</b>,-2
halogen|gas|14|23|17|35.453|Cl|^2^P°_3/2_|3.16|Chlorine|3.214|12.9676|-101.5|-34.04|v 99|-|[Ne] 3s^2^ 3p^5^|+1,3,5,7,<b>-1</b>
noble|gas|15|23|18|39.948|Ar|^1^S_0_|-|Argon|1.784|15.7596|-189.3|-185.8|v 97|-|[Ne] 3s^2^ 3p^6^|0
trans||0|41|39|88.90585|Y|^2^D_3/2_|1.22
trans||1|41|40|91.224|Zr|^3^F_2_|1.33
trans||2|41|41|92.90638|Nb|^6^D_1/2_|1.60
trans||3|41|42|95.94|Mo|^7^S_3_|2.16
trans|synthetic|4|41|43|(98)|Tc|^6^S_5/2_|1.9
trans||5|41|44|101.07|Ru|^5^F_5_|2.20
trans||6|41|45|102.90550|Rh|^4^F_9/2_|2.28
trans||7|41|46|106.42|Pd|^1^S_0_|2.20
trans||8|41|47|107.8682|Ag|^2^S_1/2_|1.93
trans||9|41|48|112.411|Cd|^1^S_0_|1.69
poor||10|41|49|114.818|In|^2^P°_1/2_|1.78
poor||11|41|50|118.710|Sn|^3^P_0_|1.96
metalloid||12|41|51|121.760|Sb|^4^S°_3/2_|2.05
metalloid||13|41|52|127.60|Te|^3^P_2_|2.10
halogen||14|41|53|126.90447|I|^2^P°_3/2_|2.66
noble|gas|15|41|54|131.293|Xe|^1^S_0_|2.60`.trim().split('\n');

const trefoil = '<svg class="rad" width="14" height="13" viewBox="0 0 14 13"><circle cx="7" cy="6.500" r="1.600"/><path d="M4.700 6.500H0Q0 2 3 .5zM9.300 6.500H14Q14 2 11 .5zM5.500 8.500L3.500 12.500Q7 13.500 10.500 12.500L8.500 8.500z"/></svg>';

for (const line of elements) {
  const [kind, phase, slot, row, z, w, sym, term, en, name, ...v] = line.split('|');
  const cut = slot === 'cut';
  const col = cut ? 2 : slot === 'L' ? 14 : 6 + 6 * slot;
  let h = `<span class="top"><span class="z">${z}</span>${z === '43' ? trefoil : ''}<span>${w}</span></span>` +
    `<span class="sym ${phase}">${sym}</span><span class="term">${rich(term)}</span><span>${en}</span>`;
  if (name) {
    const [d, ie, mp, bp, rad, st, conf, ox] = v;
    const [t, n] = rad.split(' ');
    h += `<span class="name">${name}</span><span>${d}</span><span>${ie}</span><span class="mp">${mp}</span><span class="bp">${bp}</span>` +
      `<span><em>(${t})</em> ${n}</span><span>${st}</span><span class="conf">${rich(conf)}</span><span class="ox">${ox}</span>`;
  }
  place(`el ${kind} ${cut ? 'cut' : ''}`, +row, name ? +row + 9 : 44, col, cut ? 6 : col + 6, h);
}

// Group headings: slot, row of the numeral, numeral, roman
[[-1, 11, 2, 'IIA'], [0, 29, 3, 'IIIB'], [1, 29, 4, 'IVB'], [2, 29, 5, 'VB'], [3, 29, 6, 'VIB'], [4, 29, 7, 'VIIB'],
 [5, 29, 8, 'VIII'], [6, 29, 9, 'VIII'], [7, 29, 10, 'VIII'], [8, 29, 11, 'IB'], [9, 29, 12, 'IIB'],
 [10, 11, 13, 'IIIA'], [11, 11, 14, 'IVA'], [12, 11, 15, 'VA'], [13, 11, 16, 'VIA'], [14, 11, 17, 'VIIA'], [15, 2, 18, 'VIIIA']
].forEach(([s, r, n, rom]) => {
  const c = s < 0 ? 2 : 6 + 6 * s, e = s < 0 ? 4 : c + 6;
  place('gn', r, r + 2, c, e, n);
  place('gr', r + 2, r + 3, c, e, rom);
});

place('title', 1, 5, 23, 69, 'Periodic Table of the Elements');

// Key to the cell layout
const key = (side, row, text, mod = '') => side === 'l'
  ? place('lab r ' + mod, row, row + 1, 6, 14, rich(text))
  : place('lab ' + mod, row, row + 1, 20, 32, rich(text));
key('l', 5, 'Atomic Number', 'tall');
key('l', 6, 'Symbol');
key('l', 8, 'Name');
key('l', 9, '*Density ^[Note]^', 'low');
key('l', 10, '*Melting Point (°C)');
key('l', 11, 'Atomic radius (pm)^[Note]^', 'low');
key('r', 5, '^†^Atomic Weight', 'tall');
key('r', 6, '^†^Ground-State Level', 'low');
key('r', 7, '*Electronegativity (Pauling)');
key('r', 9, '^†^Ionization Energy (eV)', 'low');
key('r', 10, '*Boiling Point (°C)');
key('r', 11, 'Crystal Structure ^[Note]^', 'low');
key('r', 12, '^†^Electron Configuration', 'low');
key('r', 13, 'Possible Oxidation States ^[Note]^', 'low');

place('lab cap', 15, 16, 9, 21, 'Phase at STP');
place('phase', 16, 18, 9, 21, '<span class="gas">Gas</span><span class="liquid">Liquid</span><span>Solid</span><span class="synthetic">Synthetic</span>');
place('lab cap', 18, 19, 9, 21, 'Categories');
[['alkali', 'Alkali Metals', 'noble', 'Noble Gas'], ['earth', 'Alkaline Earth Metals', 'halogen', 'Halogens'],
 ['trans', 'Transition Metals', 'nonmetal', 'Non Metals'], ['rare', 'Rare Earth<br>Metals', '', ''], ['poor', 'Poor Metals', 'metalloid', 'Metalloids']
].forEach(([a, at, b, bt], i) => {
  place('cat ' + a, 19 + 2 * i, 21 + 2 * i, 9, 15, at);
  if (b) place('cat ' + b, 19 + 2 * i, 21 + 2 * i, 15, 21, bt);
});

// Constants
const left = `Absolute Zero||-273.15 °C
Atomic Mass Unit|<i>m</i> _u_|1.660539x10^-27^ kg
Avogadro Constant||6.022141x10^23^ mol^-1^
Base of Natural Logarithms|<i>e</i>|2.718281828
Boltzmann constant|<i>k</i>|1.380650x10^-23^ J/K
Electron Mass|<i>m</i> _e_|9.10938356x10^-31^ kg
|m_e_<i>c</i> ^2^|0.5110 MeV
Electron Radius (Classical)|r_e_|2.8179403227x10^-15^m
Electron Volt|eV|1.6021766x10^-19^ J
Elementry Charge|<i>e</i>|1.6021766x10^-19^ C
Faraday Constant|F|96 485.333 C/mol
fine-structure constant|α|0.0072973526
First Radiation Constant|<i>2 πhc</i> ^2^|3.7417718x10^-16^ W m^2^`;
const right = `Gravitation Constant|<i>G</i>|6.67408x10^-11^ m^3^ kg^-1^ s^-2^
Molar Gas Constant|<i>R</i>|8.31446 J mol^-1^ K^-1^
Molar Volume (Ideal Gas)||0.02241396 m^3^/mol
PI|<i>π</i>|3.141592653589793
Planck Constant|<i>h</i>|6.626070x10^-34^ J s
Proton-Electron Mass Ratio|<i>m</i> _p_/<i>m</i> _e_|1836.15267389
Rydberg Constant|<i>R</i> _∞_|10 973 731.57 m^-1^
|<i>R</i> _∞_<i>c</i>|3.289842x10^15^ Hz
|<i>R</i> _∞_<i>hc</i>|13.605693 eV
Second Radiation Constant|<i>ch/k</i>|0.01438777 m K
Speed of Light in a Vacuum|<i>c</i>|299 792 458 m/s
Speed of sound in air at STP||343.2 m/s
Standard Pressure||101 325 Pa`;
const table = src => '<table>' + src.split('\n').map((l, i) =>
  `<tr class="${i === 7 ? 'tall' : ''}">` + l.split('|').map(t => `<td><div class="${t.includes('^') ? 'low' : ''}">${rich(t)}</div></td>`).join('') + '</tr>').join('') + '</table>';
place('lab cap', 15, 16, 25, 44, '<sup>†</sup>Common Constants');
place('source', 15, 16, 44, 64, 'Source: physics.nist.gov (updated 9/19/2018)');
place('consts', 16, 29, 25, 44, table(left));
place('consts', 16, 29, 44, 64, table(right));

place('hide', 1, 3, 103, 105, 'HIDE BACKGROUND COLOR');
place('no', 3, 5, 103, 104, 'No');
place('false', 8, 9, 103, 104, 'FALSE');
```
